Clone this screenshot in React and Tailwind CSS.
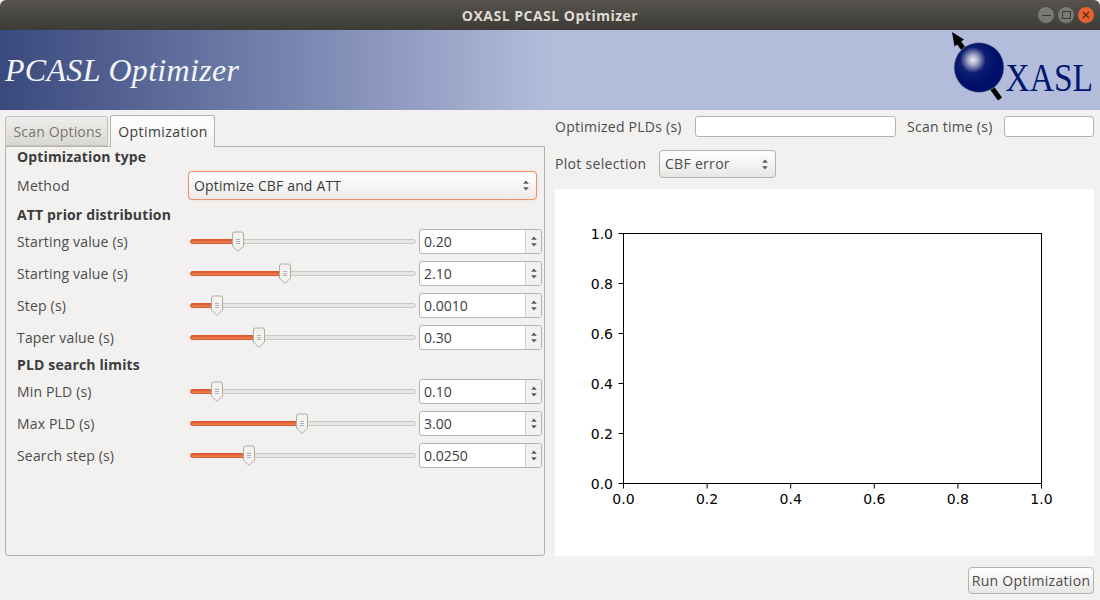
import React from 'react'

const UI_FONT = "font-['Open_Sans',sans-serif]"

const ATT_ROWS = [
  { label: 'Starting value (s)', value: '0.20', pos: 48 },
  { label: 'Starting value (s)', value: '2.10', pos: 95 },
  { label: 'Step (s)', value: '0.0010', pos: 27 },
  { label: 'Taper value (s)', value: '0.30', pos: 69 },
]

const PLD_ROWS = [
  { label: 'Min PLD (s)', value: '0.10', pos: 27 },
  { label: 'Max PLD (s)', value: '3.00', pos: 112 },
  { label: 'Search step (s)', value: '0.0250', pos: 59 },
]

const TICKS = [0, 0.2, 0.4, 0.6, 0.8, 1]

function Arrows() {
  return (
    <svg width="8" height="13" viewBox="0 0 8 13" className="shrink-0">
      <path d="M4 1.5 L6.8 4.7 H1.2 Z" fill="#5a5a5a" />
      <path d="M4 11.5 L6.8 8.3 H1.2 Z" fill="#5a5a5a" />
    </svg>
  )
}

function Heading({ children }) {
  return <div className="h-[15px] flex items-center text-[14px] leading-none font-bold text-[#3c3c3c] tracking-[0.15px]">{children}</div>
}

function Slider({ pos }) {
  return (
    <div className="relative w-[226px] h-[25px] flex items-center">
      <div className="w-full h-[5px] rounded-full bg-[#e8e7e5] border border-[#cbc8c3] -mt-[1px]" />
      <div className="absolute left-0 top-[10px] h-[5px] rounded-full bg-gradient-to-b from-[#dd5a2c] to-[#f2835a] border border-[#d9582c]" style={{ width: pos }} />
      <svg width="14" height="22" viewBox="0 0 14 22" className="absolute top-[2px]" style={{ left: pos - 7 }}>
        <path d="M1.5 3 Q1.5 1 3.5 1 H10.5 Q12.5 1 12.5 3 V15 L7 20.5 L1.5 15 Z" fill="#f3f2f0" stroke="#aeaba6" />
        <path d="M5 8.5 H9 M5 10.5 H9 M5 12.5 H9" stroke="#b5b2ad" />
      </svg>
    </div>
  )
}

function SliderRow({ label, value, pos }) {
  return (
    <div className="flex items-center h-[25px]">
      <div className="w-[173px] text-[14px] text-[#4c4c4c] tracking-[0.17px]">{label}</div>
      <Slider pos={pos} />
      <div className="ml-[3px] w-[123px] h-[25px] flex rounded-[3px] border border-[#b6b3ae] bg-white overflow-hidden">
        <div className="flex-1 px-[4px] flex items-center text-[14px] text-[#3c3c3c]">{value}</div>
        <div className="w-[16px] flex items-center justify-center border-l border-[#d5d3cf] bg-[#f2f1f0]">
          <Arrows />
        </div>
      </div>
    </div>
  )
}

function Chart() {
  const x0 = 68
  const y0 = 44
  const w = 418
  const h = 250
  return (
    <svg width="539" height="367" viewBox="0 0 539 367" className="block">
      <rect x={x0 + 0.5} y={y0 + 0.5} width={w} height={h} fill="white" stroke="black" />
      {TICKS.map((t) => {
        const x = x0 + 0.5 + t * w
        const y = y0 + 0.5 + (1 - t) * h
        return (
          <g key={t} fontFamily="'DejaVu Sans', sans-serif" fontSize="14" fill="black">
            <path d={`M${x} ${y0 + h + 0.5} v5`} stroke="black" />
            <path d={`M${x0 + 0.5} ${y} h-5`} stroke="black" />
            <text x={x} y={y0 + h + 21} textAnchor="middle">{t.toFixed(1)}</text>
            <text x={x0 - 10} y={y + 5} textAnchor="end">{t.toFixed(1)}</text>
          </g>
        )
      })}
    </svg>
  )
}

function Logo() {
  return (
    <svg width="150" height="80" viewBox="0 0 150 80" className="shrink-0 overflow-visible">
      <defs>
        <radialGradient id="ball" cx="0.38" cy="0.35" r="0.5">
          <stop offset="0" stopColor="#eeeef2" />
          <stop offset="0.2" stopColor="#a8acc8" />
          <stop offset="0.52" stopColor="#0c1c70" />
          <stop offset="1" stopColor="#00106a" />
        </radialGradient>
      </defs>
      <path d="M12 10 L55 69" stroke="black" strokeWidth="5" />
      <path d="M7 2 L19 9.5 L14.5 12.5 L9.5 16.5 Z" fill="black" />
      <circle cx="34" cy="37.5" r="25" fill="url(#ball)" stroke="#9ea0a8" strokeWidth="0.7" />
      <text transform="translate(60.5 60.5) scale(0.86 1)" fontFamily="'Liberation Serif', serif" fontSize="39" fill="#00176e">XASL</text>
    </svg>
  )
}

function WindowButtons() {
  return (
    <div className="absolute right-[5px] top-[6px] flex gap-[2px]">
      <div className="w-[18px] h-[18px] rounded-full bg-[#7b7973] border border-[#4a4944] flex items-center justify-center">
        <div className="w-[9px] h-[1px] bg-[#3a3935]" />
      </div>
      <div className="w-[18px] h-[18px] rounded-full bg-[#7b7973] border border-[#4a4944] flex items-center justify-center">
        <div className="w-[9px] h-[8px] border border-[#3a3935]" />
      </div>
      <div className="w-[18px] h-[18px] rounded-full bg-[#e8602f] border border-[#4a4944] flex items-center justify-center">
        <svg width="8" height="8" viewBox="0 0 8 8">
          <path d="M1 1 L7 7 M7 1 L1 7" stroke="#4a2a1a" strokeWidth="1.2" />
        </svg>
      </div>
    </div>
  )
}

export default function App() {
  return (
    <div className={`w-[1100px] h-[600px] flex flex-col overflow-hidden bg-[#f2f1f0] ${UI_FONT}`}>
      {/* Title bar */}
      <div className="relative h-[30px] shrink-0 flex items-center justify-center rounded-t-[6px] bg-gradient-to-b from-[#56544d] to-[#3c3b36]">
        <span className="text-[14px] font-bold text-[#dfdbd2] tracking-[0.5px]">OXASL PCASL Optimizer</span>
        <WindowButtons />
      </div>

      {/* Banner */}
      <div className="h-[80px] shrink-0 flex items-center justify-between pl-[4px] pr-[5px] border-l border-[#3c4a7d] bg-gradient-to-r from-[#3b4a7e] to-[#b3bcdb] to-50%">
        <span className="-mt-[1px] font-['Liberation_Serif',serif] italic text-[32px] text-[#f4f5f9] tracking-[0.3px]">PCASL Optimizer</span>
        <Logo />
      </div>

      <div className="flex-1 flex pl-[5px] pr-[6px] gap-[10px] min-h-0">
        {/* Left column */}
        <div className="w-[540px] shrink-0 flex flex-col pt-[5px]">
          <div className="flex items-end h-[32px] gap-[2px] relative z-10 -mb-[1px]">
            <div className="w-[103px] h-[30px] mb-[1px] pl-[2px] pt-[1px] flex items-center justify-center rounded-t-[3px] border border-[#c4c1bc] bg-gradient-to-b from-[#efeeec] to-[#d9d7d3] text-[14px] text-[#77756f] tracking-[0.17px]">Scan Options</div>
            <div className="w-[105px] h-[32px] pl-[1px] pb-[1px] flex items-center justify-center rounded-t-[3px] border border-b-0 border-[#b6b3ae] bg-gradient-to-b from-white to-[#f2f1f0] text-[14px] text-[#3c3c3c] tracking-[0.45px]">Optimization</div>
          </div>
          <div className="h-[410px] border border-[#b6b3ae] rounded-b-[3px] pl-[11px] pr-[2px] pt-[2px] flex flex-col gap-[7px]">
            <Heading>Optimization type</Heading>
            <div className="flex items-center h-[29px]">
              <div className="w-[171px] text-[14px] text-[#4c4c4c] tracking-[0.3px]">Method</div>
              <div className="w-[349px] h-[29px] flex items-center justify-between pl-[5px] pr-[6px] rounded-[4px] border border-[#ee8e6c] shadow-[0_0_1px_#ee8e6c] bg-gradient-to-b from-white to-[#ecebe9] text-[14px] text-[#3c3c3c] tracking-[0.15px]">
                Optimize CBF and ATT
                <Arrows />
              </div>
            </div>
            <Heading>ATT prior distribution</Heading>
            {ATT_ROWS.map((r, i) => <SliderRow key={i} {...r} />)}
            <Heading>PLD search limits</Heading>
            {PLD_ROWS.map((r, i) => <SliderRow key={i} {...r} />)}
          </div>
        </div>

        {/* Right column */}
        <div className="flex-1 flex flex-col pt-[6px]">
          <div className="h-[21px] flex items-center text-[14px] text-[#4c4c4c] tracking-[0.25px]">
            <span className="w-[140px]">Optimized PLDs (s)</span>
            <div className="w-[201px] h-[21px] rounded-[3px] border border-[#b6b3ae] bg-white" />
            <span className="ml-[11px] w-[97px]">Scan time (s)</span>
            <div className="w-[90px] h-[21px] rounded-[3px] border border-[#b6b3ae] bg-white" />
          </div>
          <div className="h-[28px] mt-[13px] flex items-center text-[14px] text-[#4c4c4c] tracking-[0.3px]">
            <span className="w-[104px] -mt-[1px]">Plot selection</span>
            <div className="w-[117px] h-[28px] flex items-center justify-between pl-[5px] pr-[6px] rounded-[4px] border border-[#b6b3ae] bg-gradient-to-b from-white to-[#e8e7e5]">
              <span className="-mt-[1px]">CBF error</span>
              <Arrows />
            </div>
          </div>
          <div className="mt-[11px] h-[367px] bg-white">
            <Chart />
          </div>
          <div className="mt-[11px] flex justify-end">
            <div className="w-[126px] h-[27px] flex items-center justify-center rounded-[4px] border border-[#b6b3ae] bg-gradient-to-b from-white to-[#e8e7e5] text-[14px] text-[#4c4c4c] tracking-[0.3px]">Run Optimization</div>
          </div>
        </div>
      </div>
    </div>
  )
}
